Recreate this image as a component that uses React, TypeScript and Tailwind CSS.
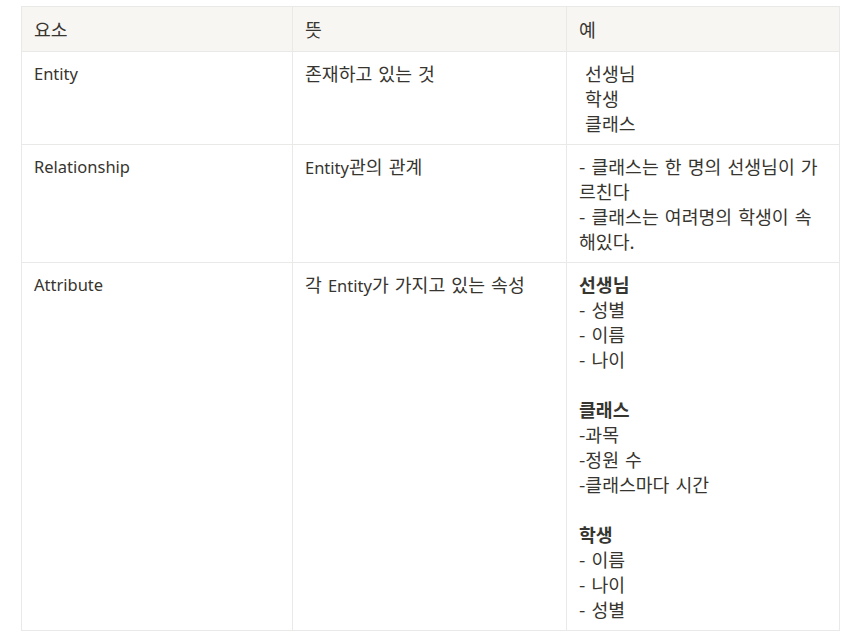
import React from "react";

const cell = "border border-[#e9e9e7] align-top px-[12px] pt-[9px] pb-[8px] whitespace-pre-wrap break-words";
const head = "border border-[#e9e9e7] align-top px-[12px] pt-[10px] pb-[9px] font-normal text-left bg-[#f7f6f3]";
const latin = "text-[16.5px] font-['Noto_Sans',sans-serif]";

export default function App() {
  return (
    <div
      className="min-h-[637px] bg-white pl-[21px] pt-[6px] text-[#37352f] text-[18.3px] leading-[25px] [word-spacing:2px]"
      style={{ fontFamily: '"Noto Sans CJK KR", "Noto Sans", sans-serif' }}
    >
      <table className="table-fixed border-collapse w-[818px]">
        <colgroup>
          <col className="w-[271px]" />
          <col className="w-[274px]" />
          <col className="w-[273px]" />
        </colgroup>
        <thead>
          <tr>
            <th className={head}>요소</th>
            <th className={head}>뜻</th>
            <th className={head}>예</th>
          </tr>
        </thead>
        <tbody>
          <tr>
            <td className={`${cell} ${latin}`}>Entity</td>
            <td className={cell}>존재하고 있는 것</td>
            <td className={cell}>{" 선생님\n 학생\n 클래스"}</td>
          </tr>
          <tr>
            <td className={`${cell} ${latin}`}>Relationship</td>
            <td className={cell}>
              <span className={latin}>Entity</span>관의 관계
            </td>
            <td className={cell}>
              {"- 클래스는 한 명의 선생님이 가르친다\n- 클래스는 여려명의 학생이 속해있다."}
            </td>
          </tr>
          <tr>
            <td className={`${cell} ${latin}`}>Attribute</td>
            <td className={cell}>
              각 <span className={latin}>Entity</span>가 가지고 있는 속성
            </td>
            <td className={cell}>
              <span className="font-bold">선생님</span>
              {"\n- 성별\n- 이름\n- 나이\n\n"}
              <span className="font-bold">클래스</span>
              {"\n-과목\n-정원 수\n-클래스마다 시간\n\n"}
              <span className="font-bold">학생</span>
              {"\n- 이름\n- 나이\n- 성별"}
            </td>
          </tr>
        </tbody>
      </table>
    </div>
  );
}
